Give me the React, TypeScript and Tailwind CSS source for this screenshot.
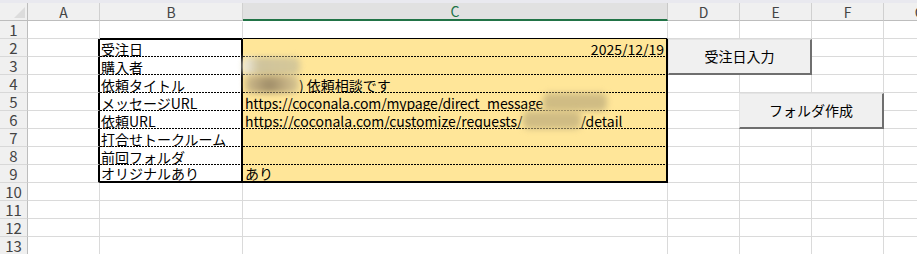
import React from "react";

const FONT = "font-['Noto_Sans_CJK_JP','Noto_Sans',sans-serif]";
const DOT =
  "bg-[image:repeating-linear-gradient(90deg,#000_0px,#000_2px,transparent_2px,transparent_3px)] bg-[length:100%_1px] bg-bottom bg-no-repeat";

const GRID_W = ["w-[72px]", "w-[143px]", "w-[425px]", "w-[72px]", "w-[72px]", "w-[72px]", "w-[72px]"];
const LETTERS = ["A", "B", "C", "D", "E", "F", "G"];

function RowHead({ n }: { n: number }) {
  return (
    <div className="w-[28px] shrink-0 h-full bg-[#f0f0f0] border-r border-r-[#bdbdbd] border-b border-b-[#d8d8d8] flex items-center justify-center text-[15px] leading-none text-[#444]">
      {n}
    </div>
  );
}

function Blob({ w, c }: { w: string; c: string }) {
  return <span className={`inline-block h-[18px] align-bottom blur-[3px] rounded-[6px] ${w} ${c}`} />;
}

type Item = { label: string; value: React.ReactNode; right?: boolean };

const items: Item[] = [
  { label: "受注日", value: "2025/12/19", right: true },
  {
    label: "購入者",
    value: <Blob w="w-[58px] -ml-[3px]" c="bg-[linear-gradient(90deg,#f4f1e6,#cfc39c_30%,#d6c898)]" />,
  },
  {
    label: "依頼タイトル",
    value: (
      <>
        <Blob w="w-[54px]" c="bg-[radial-gradient(circle_at_45%_60%,#9c8a66,#c4b083_55%,#dccb95)]" />
        <span>)</span>
        <span className="ml-[3px]">依頼相談です</span>
      </>
    ),
  },
  {
    label: "メッセージURL",
    value: (
      <>
        <span className="tracking-[-0.15px]">https://coconala.com/mypage/direct_message</span>
        <Blob w="w-[64px]" c="bg-[#d0bc84]" />
      </>
    ),
  },
  {
    label: "依頼URL",
    value: (
      <>
        <span>https://coconala.com/customize/requests/</span>
        <Blob w="w-[58px]" c="bg-[#d0bc84]" />
        <span>/detail</span>
      </>
    ),
  },
  { label: "打合せトークルーム", value: "" },
  { label: "前回フォルダ", value: "" },
  { label: "オリジナルあり", value: "あり" },
];

function GridCell({ w, extra = "" }: { w: string; extra?: string }) {
  return <div className={`${w} shrink-0 h-full border-r border-b border-[#dadada] ${extra}`} />;
}

export default function App() {
  return (
    <div className={`w-[917px] h-[254px] overflow-hidden bg-white relative ${FONT}`}>
      <div className="h-[3px] bg-[#e9e9ef]" />
      {/* column headers */}
      <div className="flex h-[18px]">
        <div className="w-[28px] shrink-0 h-full bg-[#f0f0f0] border-r border-b border-[#bdbdbd] relative">
          <div className="absolute right-[2px] bottom-[2px] w-0 h-0 border-l-[11px] border-l-transparent border-b-[11px] border-b-[#dcdcdc]" />
        </div>
        {GRID_W.map((w, i) =>
          i === 2 ? (
            <div
              key={i}
              className={`${w} shrink-0 h-full bg-[#e1e1e1] border-r border-r-[#c8c8c8] border-b-2 border-b-[#217346] flex items-center justify-center text-[14px] leading-none text-[#217346]`}
            >
              {LETTERS[i]}
            </div>
          ) : (
            <div
              key={i}
              className={`${w} shrink-0 h-full bg-[#f0f0f0] border-r border-r-[#d0d0d0] border-b border-b-[#bdbdbd] flex items-center justify-center text-[14px] leading-none text-[#444]`}
            >
              {LETTERS[i]}
            </div>
          )
        )}
      </div>

      {/* row 1 */}
      <div className="flex h-[18px]">
        <RowHead n={1} />
        <GridCell w="w-[72px]" />
        <div className="w-[143px] shrink-0 h-full border-r border-r-[#dadada] border-b-2 border-b-black mt-[1px]" />
        <div className="w-[425px] shrink-0 h-full border-r border-r-[#dadada] border-b-2 border-b-black mt-[1px]" />
        <GridCell w="w-[72px]" />
        <GridCell w="w-[72px]" />
        <GridCell w="w-[72px]" />
        <GridCell w="w-[72px]" />
      </div>

      {/* rows 2-9 */}
      {items.map((it, i) => {
        const last = i === items.length - 1;
        const bottom = last ? "border-b-2 border-b-black" : DOT;
        return (
          <div key={i} className="flex h-[18px]">
            <RowHead n={i + 2} />
            <div className="w-[72px] shrink-0 h-full border-b border-b-[#dadada] border-r-2 border-r-black" />
            <div
              className={`w-[143px] shrink-0 h-full border-r-2 border-r-black ${bottom} flex items-end pl-[1px] text-[14px] leading-[15px] text-black whitespace-nowrap overflow-hidden`}
            >
              {it.label}
            </div>
            <div
              className={`w-[425px] shrink-0 h-full bg-[#ffe699] border-r-2 border-r-black ${bottom} flex items-end ${
                it.right ? "justify-end pr-[2px]" : "pl-[2px]"
              } text-[14px] leading-[15px] text-black whitespace-nowrap`}
            >
              {it.value}
            </div>
            <GridCell w="w-[72px]" />
            <GridCell w="w-[72px]" />
            <GridCell w="w-[72px]" />
            <GridCell w="w-[72px]" />
          </div>
        );
      })}

      {/* rows 10-13 */}
      {[10, 11, 12, 13].map((n) => (
        <div key={n} className="flex h-[18px]">
          <RowHead n={n} />
          {GRID_W.map((w, i) => (
            <GridCell key={i} w={w} />
          ))}
        </div>
      ))}

      {/* form buttons */}
      <div className="absolute left-[668px] top-[39px] w-[144px] h-[36px] bg-[#f0f0f0] border-t border-l border-[#e4e4e4] border-r-2 border-b-2 border-r-[#6f6f6f] border-b-[#6f6f6f] flex items-center justify-center text-[14px] text-black">
        受注日入力
      </div>
      <div className="absolute left-[739px] top-[93px] w-[145px] h-[36px] bg-[#f0f0f0] border-t border-l border-[#e4e4e4] border-r-2 border-b-2 border-r-[#6f6f6f] border-b-[#6f6f6f] flex items-center justify-center text-[14px] text-black">
        フォルダ作成
      </div>
    </div>
  );
}
